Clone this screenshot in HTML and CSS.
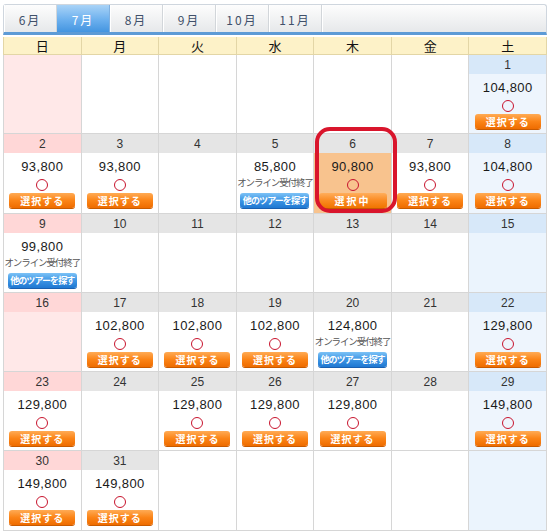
FILE: index.html
```html
<!DOCTYPE html>
<html lang="ja">
<head>
<meta charset="utf-8">
<link rel="stylesheet" href="styles.css">
</head>
<body>
<div class="page">
  <div class="tabs">
    <div class="tab">6月</div>
    <div class="tab active">7月</div>
    <div class="tab">8月</div>
    <div class="tab">9月</div>
    <div class="tab">10月</div>
    <div class="tab">11月</div>
    <div class="tab-fill"></div>
  </div>
  <div class="cal">
    <div class="dow">
      <div>日</div><div>月</div><div>火</div><div>水</div><div>木</div><div>金</div><div>土</div>
    </div>
    <div class="grid">
      <!-- week 1 -->
      <div class="cell empty sun"></div>
      <div class="cell empty"></div>
      <div class="cell empty"></div>
      <div class="cell empty"></div>
      <div class="cell empty"></div>
      <div class="cell empty"></div>
      <div class="cell sat"><div class="date">1</div><div class="body"><div class="price">104,800</div><div class="mark"><span class="circle"></span></div><span class="btn">選択する</span></div></div>
      <!-- week 2 -->
      <div class="cell sun"><div class="date">2</div><div class="body"><div class="price">93,800</div><div class="mark"><span class="circle"></span></div><span class="btn">選択する</span></div></div>
      <div class="cell"><div class="date">3</div><div class="body"><div class="price">93,800</div><div class="mark"><span class="circle"></span></div><span class="btn">選択する</span></div></div>
      <div class="cell"><div class="date">4</div><div class="body"></div></div>
      <div class="cell"><div class="date">5</div><div class="body"><div class="price">85,800</div><div class="mark note">オンライン受付終了</div><span class="btn blue">他のツアーを探す</span></div></div>
      <div class="cell selected"><div class="date">6</div><div class="body"><div class="price">90,800</div><div class="mark"><span class="circle"></span></div><span class="btn current">選択中</span></div></div>
      <div class="cell"><div class="date">7</div><div class="body"><div class="price">93,800</div><div class="mark"><span class="circle"></span></div><span class="btn">選択する</span></div></div>
      <div class="cell sat"><div class="date">8</div><div class="body"><div class="price">104,800</div><div class="mark"><span class="circle"></span></div><span class="btn">選択する</span></div></div>
      <!-- week 3 -->
      <div class="cell sun"><div class="date">9</div><div class="body"><div class="price">99,800</div><div class="mark note">オンライン受付終了</div><span class="btn blue">他のツアーを探す</span></div></div>
      <div class="cell"><div class="date">10</div><div class="body"></div></div>
      <div class="cell"><div class="date">11</div><div class="body"></div></div>
      <div class="cell"><div class="date">12</div><div class="body"></div></div>
      <div class="cell"><div class="date">13</div><div class="body"></div></div>
      <div class="cell"><div class="date">14</div><div class="body"></div></div>
      <div class="cell sat nodata"><div class="date">15</div><div class="body"></div></div>
      <!-- week 4 -->
      <div class="cell sun nodata"><div class="date">16</div><div class="body"></div></div>
      <div class="cell"><div class="date">17</div><div class="body"><div class="price">102,800</div><div class="mark"><span class="circle"></span></div><span class="btn">選択する</span></div></div>
      <div class="cell"><div class="date">18</div><div class="body"><div class="price">102,800</div><div class="mark"><span class="circle"></span></div><span class="btn">選択する</span></div></div>
      <div class="cell"><div class="date">19</div><div class="body"><div class="price">102,800</div><div class="mark"><span class="circle"></span></div><span class="btn">選択する</span></div></div>
      <div class="cell"><div class="date">20</div><div class="body"><div class="price">124,800</div><div class="mark note">オンライン受付終了</div><span class="btn blue">他のツアーを探す</span></div></div>
      <div class="cell"><div class="date">21</div><div class="body"></div></div>
      <div class="cell sat"><div class="date">22</div><div class="body"><div class="price">129,800</div><div class="mark"><span class="circle"></span></div><span class="btn">選択する</span></div></div>
      <!-- week 5 -->
      <div class="cell sun"><div class="date">23</div><div class="body"><div class="price">129,800</div><div class="mark"><span class="circle"></span></div><span class="btn">選択する</span></div></div>
      <div class="cell"><div class="date">24</div><div class="body"></div></div>
      <div class="cell"><div class="date">25</div><div class="body"><div class="price">129,800</div><div class="mark"><span class="circle"></span></div><span class="btn">選択する</span></div></div>
      <div class="cell"><div class="date">26</div><div class="body"><div class="price">129,800</div><div class="mark"><span class="circle"></span></div><span class="btn">選択する</span></div></div>
      <div class="cell"><div class="date">27</div><div class="body"><div class="price">129,800</div><div class="mark"><span class="circle"></span></div><span class="btn">選択する</span></div></div>
      <div class="cell"><div class="date">28</div><div class="body"></div></div>
      <div class="cell sat"><div class="date">29</div><div class="body"><div class="price">149,800</div><div class="mark"><span class="circle"></span></div><span class="btn">選択する</span></div></div>
      <!-- week 6 -->
      <div class="cell sun"><div class="date">30</div><div class="body"><div class="price">149,800</div><div class="mark"><span class="circle"></span></div><span class="btn">選択する</span></div></div>
      <div class="cell"><div class="date">31</div><div class="body"><div class="price">149,800</div><div class="mark"><span class="circle"></span></div><span class="btn">選択する</span></div></div>
      <div class="cell empty"></div>
      <div class="cell empty"></div>
      <div class="cell empty"></div>
      <div class="cell empty"></div>
      <div class="cell empty sat"></div>
    </div>
    <div class="highlight"></div>
  </div>
</div>
</body>
</html>
```

FILE: styles.css
```css
html, body {
  margin: 0;
  padding: 0;
  background: #ffffff;
}
body {
  font-family: "Liberation Sans", "Noto Sans CJK JP", sans-serif;
  color: #222;
}
.page {
  width: 544px;
  padding: 4px 3px 0 3px;
}
.tabs {
  display: flex;
  height: 27px;
  border: 1px solid #cfd6de;
  border-bottom: 3px solid #5d9bd6;
  border-radius: 3px 3px 0 0;
  box-sizing: content-box;
  background: linear-gradient(#fdfdfd, #e6e8ea);
}
.tab {
  width: 53px;
  flex: none;
  border-right: 1px solid #d2d6da;
  box-shadow: inset 1px 0 0 #ffffff;
  display: flex;
  align-items: center;
  justify-content: center;
  font-family: "Noto Sans CJK JP", sans-serif;
  font-size: 12px;
  letter-spacing: 2px;
  color: #40506a;
  padding-top: 1px;
  box-sizing: border-box;
}
.tab.active {
  background: linear-gradient(#a9d3f7, #6cb0ee 55%, #4495e0);
  color: #ffffff;
  box-shadow: none;
  border-right-color: #7fb0e0;
}
.tab-fill {
  flex: 1;
  box-shadow: inset 1px 0 0 #ffffff;
}
.cal {
  position: relative;
  margin-top: 2px;
}
.dow {
  display: grid;
  grid-template-columns: repeat(7, 1fr);
  gap: 1px;
  background: #e3d6a6;
  padding: 0 1px 1px 1px;
  height: 17px;
}
.dow div {
  background: #fdf2c8;
  text-align: center;
  font-family: "Noto Sans CJK JP", sans-serif;
  font-size: 13px;
  line-height: 17px;
  color: #111;
}
.grid {
  display: grid;
  grid-template-columns: repeat(7, 1fr);
  grid-auto-rows: 78.3px;
  gap: 1px;
  background: #d6d6d6;
  padding: 0 1px 1px 1px;
}
.cell {
  display: flex;
  flex-direction: column;
  background: #ffffff;
  min-width: 0;
}
.cell.empty { background: #ffffff; }
.cell.empty.sun { background: #ffe8e8; }
.cell.empty.sat { background: #ebf4fd; }
.date {
  height: 19px;
  line-height: 20px;
  text-align: center;
  font-size: 12px;
  color: #333;
  background: #e5e5e5;
  flex: none;
}
.sun .date { background: #ffd7d7; }
.sat .date { background: #d7e8f9; }
.body {
  flex: 1;
  display: flex;
  flex-direction: column;
  align-items: center;
  padding-top: 6px;
  box-sizing: border-box;
  background: #ffffff;
}
.sat .body { background: #eef5fd; }
.nodata.sun .body { background: #ffe8e8; }
.nodata.sat .body { background: #ebf4fd; }
.selected .body { background: #f8c38e; }
.price {
  font-size: 13px;
  line-height: 15px;
  height: 15px;
  color: #1a1a1a;
  letter-spacing: 0.4px;
}
.mark {
  height: 17px;
  display: flex;
  justify-content: center;
}
.mark.note {
  font-family: "Noto Sans CJK JP", sans-serif;
  font-size: 9.5px;
  line-height: 17px;
  color: #555;
  white-space: nowrap;
  letter-spacing: -1.1px;
}
.circle {
  width: 12px;
  height: 12px;
  box-sizing: border-box;
  border: 1.5px solid #c8142e;
  border-radius: 50%;
  margin-top: 5px;
}
.btn {
  margin-top: 2px;
  width: 66px;
  height: 15px;
  border-radius: 3px;
  background: linear-gradient(#ffab55, #fb8417 50%, #ee6c00);
  box-shadow: 0 1px 0 #c85a00;
  color: #ffffff;
  font-family: "Noto Sans CJK JP", sans-serif;
  font-size: 10px;
  font-weight: bold;
  line-height: 15px;
  text-align: center;
  letter-spacing: 1px;
  white-space: nowrap;
}
.btn.current {
  width: 68px;
  letter-spacing: 2px;
  background: linear-gradient(#ffae5c, #fa8a22 50%, #f07400);
}
.btn.blue {
  width: 69px;
  background: linear-gradient(#7cc2f6, #3d95e4 50%, #1f78d2);
  box-shadow: 0 1px 0 #1a60b0;
  font-size: 9px;
  font-weight: bold;
  letter-spacing: -0.9px;
}
.highlight {
  position: absolute;
  left: 312px;
  top: 90px;
  width: 82px;
  height: 86px;
  box-sizing: border-box;
  border: 4.5px solid #d9152c;
  border-radius: 15px;
  pointer-events: none;
}
```
